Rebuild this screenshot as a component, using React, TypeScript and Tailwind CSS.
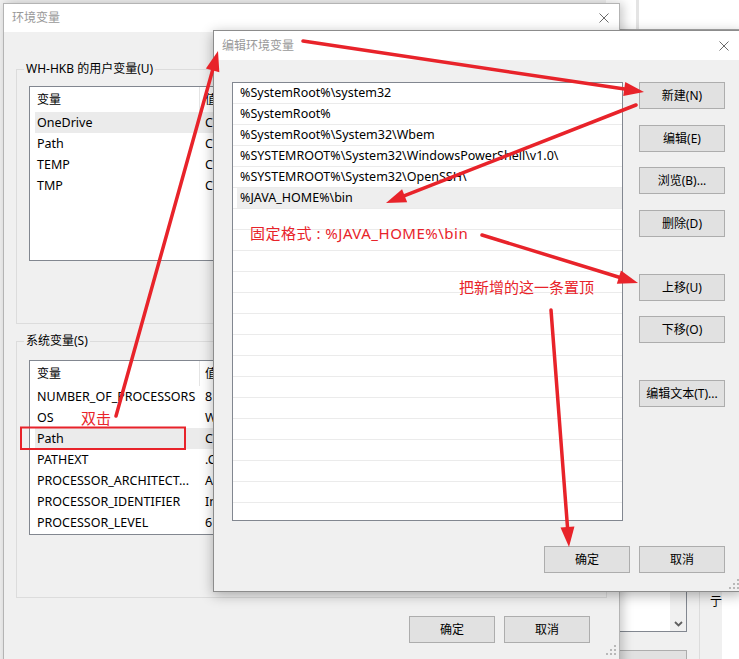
import React from "react";

const F = "font-['Noto_Sans','Noto_Sans_CJK_SC',sans-serif]";

function CloseX({ size = 10 }: { size?: number }) {
  return (
    <svg width={size} height={size} viewBox="0 0 10 10" className="shrink-0">
      <path d="M0.5 0.5 L9.5 9.5 M9.5 0.5 L0.5 9.5" stroke="#6b6b6b" strokeWidth="1" fill="none" />
    </svg>
  );
}

function Grip() {
  return (
    <svg width="10" height="10" viewBox="0 0 10 10">
      <g fill="#b8b8b8">
        <rect x="8" y="0" width="2" height="2" />
        <rect x="4" y="4" width="2" height="2" />
        <rect x="8" y="4" width="2" height="2" />
        <rect x="0" y="8" width="2" height="2" />
        <rect x="4" y="8" width="2" height="2" />
        <rect x="8" y="8" width="2" height="2" />
      </g>
    </svg>
  );
}

function WinButton({ children, className = "" }: { children: React.ReactNode; className?: string }) {
  return (
    <div
      className={`w-[86px] h-[27px] shrink-0 border border-[#adadad] bg-[#e1e1e1] flex items-center justify-center text-[12px] text-black ${className}`}
    >
      {children}
    </div>
  );
}

function ListView({ rows, highlight }: { rows: [string, string][]; highlight: number }) {
  return (
    <div className="ml-[12px] w-[565px] h-[175px] border border-[#828790] bg-white overflow-hidden text-[12.5px] text-black">
      <div className="h-[25px] flex items-center text-[12px]">
        <div className="w-[170px] h-full pl-[7px] flex items-center border-r border-[#e5e5e5]">变量</div>
        <div className="pl-[5px]">值</div>
      </div>
      {rows.map(([a, b], i) => (
        <div
          key={i}
          className={`ml-[5px] h-[21px] flex items-center pt-[1px] whitespace-nowrap ${i === highlight ? "bg-[#ebebeb]" : ""}`}
        >
          <div className="w-[164px] pl-[2px] overflow-hidden">{a}</div>
          <div className="pl-[6px]">{b}</div>
        </div>
      ))}
    </div>
  );
}

function Arrow({ x1, y1, x2, y2 }: { x1: number; y1: number; x2: number; y2: number }) {
  const dx = x2 - x1;
  const dy = y2 - y1;
  const len = Math.hypot(dx, dy);
  const ux = dx / len;
  const uy = dy / len;
  const L = 20;
  const W = 7;
  const bx = x2 - ux * L;
  const by = y2 - uy * L;
  const px = -uy;
  const py = ux;
  const pts = `${x2},${y2} ${bx + px * W},${by + py * W} ${bx - px * W},${by - py * W}`;
  return (
    <g>
      <line x1={x1} y1={y1} x2={bx + ux * 2} y2={by + uy * 2} stroke="#e8232a" strokeWidth="3.5" strokeLinecap="round" />
      <polygon points={pts} fill="#e8232a" />
    </g>
  );
}

export default function App() {
  const userRows: [string, string][] = [
    ["OneDrive", "C"],
    ["Path", "C"],
    ["TEMP", "C"],
    ["TMP", "C"],
  ];
  const sysRows: [string, string][] = [
    ["NUMBER_OF_PROCESSORS", "8"],
    ["OS", "W"],
    ["Path", "C"],
    ["PATHEXT", ".C"],
    ["PROCESSOR_ARCHITECT...", "A"],
    ["PROCESSOR_IDENTIFIER", "In"],
    ["PROCESSOR_LEVEL", "6"],
  ];
  const pathRows = [
    "%SystemRoot%\\system32",
    "%SystemRoot%",
    "%SystemRoot%\\System32\\Wbem",
    "%SYSTEMROOT%\\System32\\WindowsPowerShell\\v1.0\\",
    "%SYSTEMROOT%\\System32\\OpenSSH\\",
    "%JAVA_HOME%\\bin",
  ];

  return (
    <div className={`relative w-[739px] h-[659px] overflow-hidden bg-[#f0f0f0] ${F}`}>
      {/* window furthest behind, on the right */}
      <div className="absolute left-[606px] top-0 w-[140px] h-[659px] bg-[#f0f0f0] flex flex-col">
        <div className="h-[30px] bg-white border-b border-[#a8a8a8] flex">
          <div className="w-[30px]" />
          <div className="w-[3px] bg-[#e4e4e4]" />
        </div>
        <div className="flex-1" />
        <div className="h-[119px] flex">
          <div className="w-[81px] flex flex-col">
            <div className="h-[97px] bg-white border-r border-b border-[#828790] flex justify-end">
              <div className="w-[16px] bg-[#f0f0f0] flex flex-col justify-end items-center pb-[4px]">
                <svg width="9" height="6" viewBox="0 0 9 6">
                  <path d="M1 1 L4.5 4.5 L8 1" stroke="#606060" strokeWidth="1.8" fill="none" />
                </svg>
              </div>
            </div>
            <div className="mt-[18px] h-[10px] border-t border-x border-[#adadad] bg-[#e1e1e1]" />
          </div>
          <div className="w-[12px]" />
          <div className="w-[1px] bg-[#dcdcdc] mt-[51px]" />
          <div className="w-[10px]" />
          <div className="w-[12px] pt-[55px]">
            <div className="text-[12px] leading-[14px] text-black">亍</div>
          </div>
          <div className="flex-1 bg-white mt-[52px]" />
        </div>
      </div>

      {/* 环境变量 window */}
      <div className="absolute left-[3px] top-[3px] w-[617px] h-[670px] border border-[#b4b4b4] bg-[#f0f0f0] shadow-[3px_0_10px_rgba(0,0,0,0.22)] flex flex-col">
        <div className="h-[28px] shrink-0 bg-white flex items-center justify-between pl-[8px] pr-[10px]">
          <span className="text-[12px] text-[#999999]">环境变量</span>
          <CloseX />
        </div>
        <div className="flex flex-col pl-[12px]">
          <fieldset className="mt-[29px] w-[591px] h-[263px] border border-[#dcdcdc]">
            <legend className="ml-[7px] px-[2px] text-[12px] leading-[16px] text-black">WH-HKB 的用户变量(U)</legend>
            <div className="mt-[9px]">
              <ListView rows={userRows} highlight={0} />
            </div>
          </fieldset>
          <fieldset className="mt-[9px] w-[591px] h-[265px] border border-[#dcdcdc]">
            <legend className="ml-[7px] px-[2px] text-[12px] leading-[16px] text-black">系统变量(S)</legend>
            <div className="mt-[11px]">
              <ListView rows={sysRows} highlight={2} />
            </div>
          </fieldset>
          <div className="mt-[18px] flex justify-end gap-[9px] pr-[29px]">
            <WinButton>确定</WinButton>
            <WinButton>取消</WinButton>
          </div>
          <div className="flex justify-end pr-[3px] mt-[2px]">
            <Grip />
          </div>
        </div>
      </div>

      {/* 编辑环境变量 dialog */}
      <div className="absolute left-[213px] top-[30px] w-[530px] h-[562px] border border-[#8c8c8c] bg-[#f0f0f0] shadow-[0_3px_12px_rgba(0,0,0,0.3)] flex flex-col">
        <div className="h-[29px] shrink-0 bg-white flex items-center justify-between pl-[8px] pr-[13px]">
          <span className="text-[12px] text-[#999999]">编辑环境变量</span>
          <CloseX />
        </div>
        <div className="flex flex-col pl-[18px] pt-[22px] flex-1">
          <div className="flex gap-[16px]">
            <div className="w-[391px] h-[439px] border border-[#828790] bg-white overflow-hidden text-[12.5px] text-black">
              {Array.from({ length: 21 }).map((_, i) => (
                <div key={i} className="h-[21px] border-b border-[#ebebeb] flex">
                  <div
                    className={`ml-[4px] flex-1 flex items-center pl-[3px] pt-[1px] whitespace-nowrap ${i === 5 ? "bg-[#eeeeee]" : ""}`}
                  >
                    {pathRows[i] ?? ""}
                  </div>
                </div>
              ))}
            </div>
            <div className="flex flex-col">
              <WinButton>新建(N)</WinButton>
              <WinButton className="mt-[16px]">编辑(E)</WinButton>
              <WinButton className="mt-[15px]">浏览(B)...</WinButton>
              <WinButton className="mt-[16px]">删除(D)</WinButton>
              <WinButton className="mt-[37px]">上移(U)</WinButton>
              <WinButton className="mt-[15px]">下移(O)</WinButton>
              <WinButton className="mt-[37px]">编辑文本(T)...</WinButton>
            </div>
          </div>
          <div className="mt-[25px] flex justify-end gap-[9px] pr-[17px]">
            <WinButton>确定</WinButton>
            <WinButton>取消</WinButton>
          </div>
          <div className="flex-1 flex justify-end items-end pr-[3px] pb-[2px]">
            <Grip />
          </div>
        </div>
      </div>

      {/* annotations */}
      <svg className="absolute left-0 top-0 pointer-events-none" width="739" height="659" viewBox="0 0 739 659">
        <rect x="21" y="427.5" width="164" height="21.5" fill="none" stroke="#e8232a" strokeWidth="2" />
        <Arrow x1={116} y1={416} x2={218} y2={51} />
        <Arrow x1={303} y1={41} x2={644} y2={92} />
        <Arrow x1={636} y1={105} x2={386} y2={203} />
        <Arrow x1={482} y1={235} x2={638} y2={283} />
        <Arrow x1={551} y1={310} x2={569} y2={547} />
      </svg>
      <div className="absolute left-[250px] top-[223px] text-[15px] leading-[20px] tracking-[0.5px] text-[#e8232a] whitespace-nowrap">
        固定格式 : %JAVA_HOME%\bin
      </div>
      <div className="absolute left-[459px] top-[277px] text-[15px] leading-[20px] text-[#e8232a] whitespace-nowrap">
        把新增的这一条置顶
      </div>
      <div className="absolute left-[81px] top-[408px] text-[15px] leading-[20px] text-[#e8232a] whitespace-nowrap">
        双击
      </div>
    </div>
  );
}
